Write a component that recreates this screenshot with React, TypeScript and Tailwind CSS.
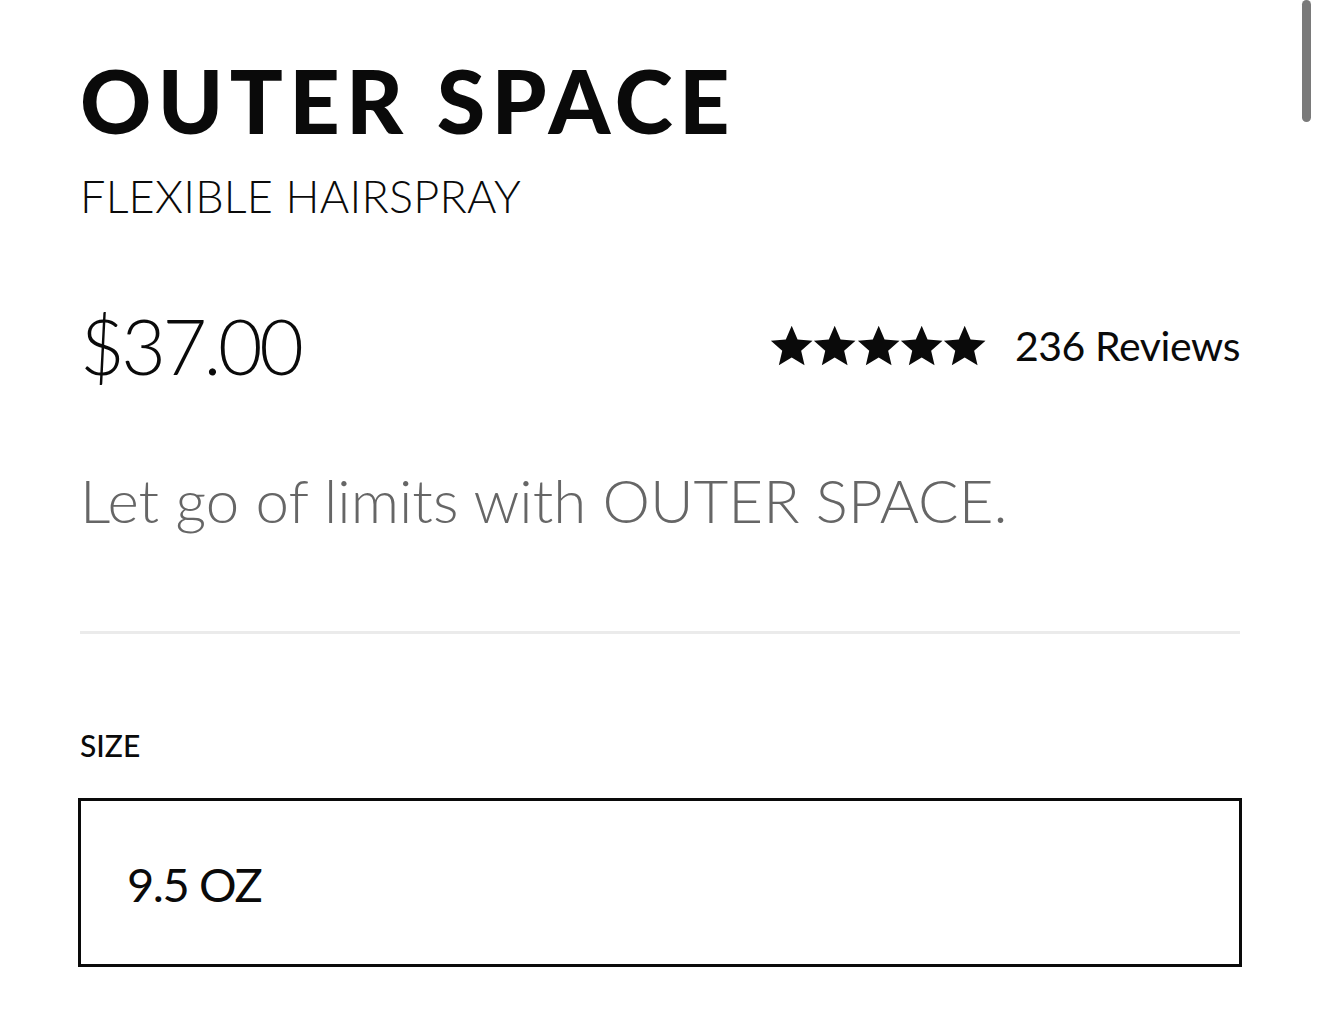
const Star = () => (
  <svg viewBox="0 0 24 24" className="h-[44px] w-[43.4px]" aria-hidden>
    <path
      d="M12 0.8l3.25 7.6 8.25.72-6.27 5.47 1.88 8.1L12 18.4 4.89 22.7l1.88-8.1L0.5 9.12l8.25-.72z"
      fill="#0a0a0a"
    />
  </svg>
);

const App = () => {
  return (
    <div className="relative min-h-[1011px] bg-white font-['Lato','Liberation_Sans',sans-serif] text-[#0a0a0a]">
      <div className="absolute right-[9px] top-0 h-[122px] w-[9px] rounded-full bg-[#7a7a7a]" />

      <div className="px-20 pt-[56px]">
        <h1 className="text-[88px] font-black leading-none tracking-[0.072em]">
          OUTER SPACE
        </h1>
        <p className="mt-[30px] text-[45px] font-light leading-none tracking-[0.005em]">
          FLEXIBLE HAIRSPRAY
        </p>

        <div className="mt-[88px] flex items-center justify-between">
          <span className="text-[77px] font-light leading-none tracking-[-0.045em]">
            $37.00
          </span>
          <div className="flex items-center gap-[28px]">
            <div className="flex">
              <Star />
              <Star />
              <Star />
              <Star />
              <Star />
            </div>
            <span className="text-[41px] font-normal leading-none tracking-[-0.01em]">
              236 Reviews
            </span>
          </div>
        </div>

        <p className="mt-[86px] text-[60px] font-light leading-none text-[#666666]">
          Let go of limits with OUTER SPACE.
        </p>

        <div className="mt-[101px] h-[3px] bg-[#ebebeb]" />

        <p className="mt-[96px] text-[30px] font-medium leading-none">SIZE</p>

        <div className="-mx-[2px] mt-[38px] flex h-[169px] items-center border-[3px] border-[#0a0a0a] px-[46px] pt-[4px]">
          <span className="text-[47px] font-normal leading-none tracking-[-0.03em]">
            9.5 OZ
          </span>
        </div>
      </div>
    </div>
  );
};

export default App;
